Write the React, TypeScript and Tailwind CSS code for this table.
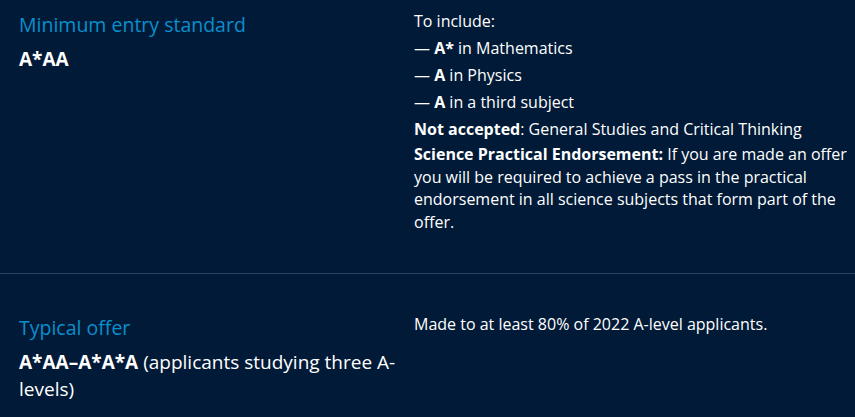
import React from "react";

const font = { fontFamily: '"Open Sans", "Noto Sans", Arial, sans-serif' };

type Row = {
  title: string;
  value: React.ReactNode;
  detail: React.ReactNode;
  top: string;
  bottom: string;
};

const rows: Row[] = [
  {
    title: "Minimum entry standard",
    value: <span className="font-bold">A*AA</span>,
    top: "pt-[8px]",
    bottom: "pb-[40px]",
    detail: (
      <>
        <div className="leading-[27px]">
          <p>To include:</p>
          <p>
            — <b>A*</b> in Mathematics
          </p>
          <p>
            — <b>A</b> in Physics
          </p>
          <p>
            — <b>A</b> in a third subject
          </p>
          <p>
            <b>Not accepted</b>: General Studies and Critical Thinking
          </p>
        </div>
        <p className="leading-[22.5px]">
          <b>Science Practical Endorsement:</b> If you are made an offer you
          will be required to achieve a pass in the practical endorsement in
          all science subjects that form part of the offer.
        </p>
      </>
    ),
  },
  {
    title: "Typical offer",
    value: (
      <>
        <span className="font-bold">A*AA–A*A*A</span> (applicants studying
        three A-levels)
      </>
    ),
    top: "pt-[37px]",
    bottom: "pb-[10px]",
    detail: (
      <p className="leading-[27px]">
        Made to at least 80% of 2022 A-level applicants.
      </p>
    ),
  },
];

export default function App() {
  return (
    <div
      className="min-h-[417px] w-full bg-[#011a37] text-white antialiased"
      style={font}
    >
      {rows.map((row, i) => (
        <section
          key={row.title}
          className={`${row.top} ${row.bottom} ${
            i > 0 ? "border-t border-[#2c3f5c]" : ""
          }`}
        >
          <div className="flex gap-[15px] pl-[19px] pr-[8px]">
            {/* left: label + grade */}
            <div className="w-[380px] shrink-0">
              <h3 className="text-[19.5px] leading-[34px] font-normal text-[#0b8fcc]">
                {row.title}
              </h3>
              <div className="mt-[4px] text-[19px] leading-[27px] text-white">
                {row.value}
              </div>
            </div>
            {/* right: details */}
            <div className="flex-1 text-[16px] text-white">{row.detail}</div>
          </div>
        </section>
      ))}
    </div>
  );
}
